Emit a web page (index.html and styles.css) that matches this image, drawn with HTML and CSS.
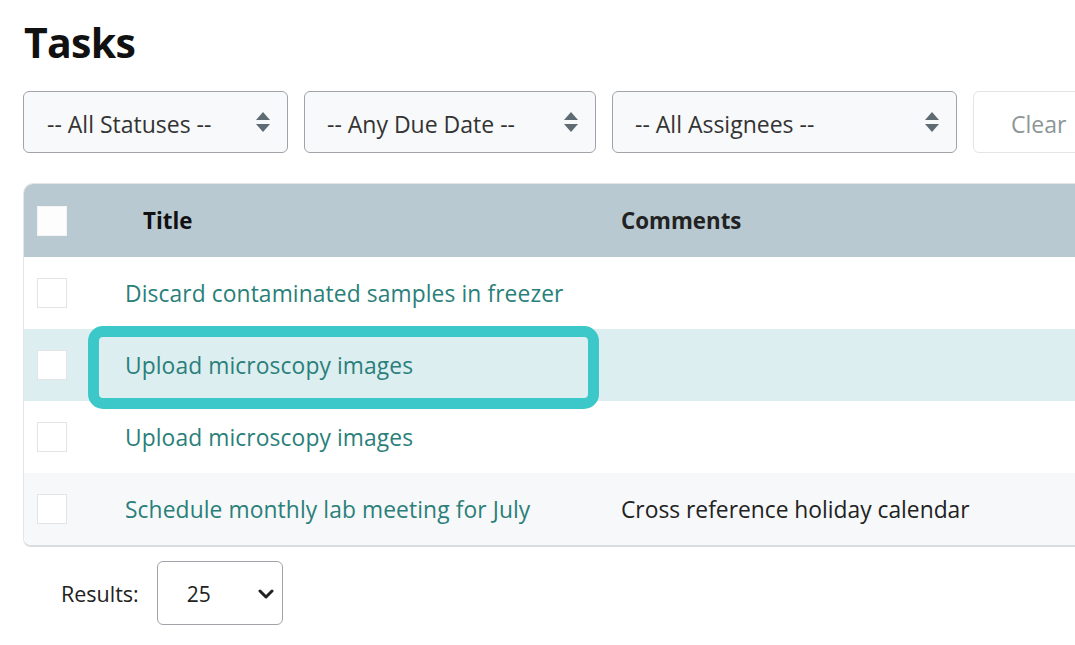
FILE: index.html
```html
<!DOCTYPE html>
<html lang="en">
<head>
<meta charset="utf-8">
<title>Tasks</title>
<link rel="stylesheet" href="styles.css">
</head>
<body>
<div class="page">
  <h1 class="title">Tasks</h1>

  <div class="filters">
    <div class="select w1">
      <span>-- All Statuses --</span>
      <svg class="updown" width="16" height="22" viewBox="0 0 16 22"><path d="M8 1 L15 9 L1 9 Z M1 13 L15 13 L8 21 Z" fill="#5f6b73"/></svg>
    </div>
    <div class="select w2">
      <span>-- Any Due Date --</span>
      <svg class="updown" width="16" height="22" viewBox="0 0 16 22"><path d="M8 1 L15 9 L1 9 Z M1 13 L15 13 L8 21 Z" fill="#5f6b73"/></svg>
    </div>
    <div class="select w3">
      <span>-- All Assignees --</span>
      <svg class="updown" width="16" height="22" viewBox="0 0 16 22"><path d="M8 1 L15 9 L1 9 Z M1 13 L15 13 L8 21 Z" fill="#5f6b73"/></svg>
    </div>
    <div class="btn-clear">Clear</div>
  </div>

  <div class="table">
    <div class="row head">
      <div class="cell-check"><span class="box box-head"></span></div>
      <div class="cell-title th-title">Title</div>
      <div class="cell-comments">Comments</div>
    </div>
    <div class="row">
      <div class="cell-check"><span class="box"></span></div>
      <div class="cell-title"><a class="link">Discard contaminated samples in freezer</a></div>
      <div class="cell-comments"></div>
    </div>
    <div class="row active">
      <div class="cell-check"><span class="box"></span></div>
      <div class="cell-title"><a class="link">Upload microscopy images</a></div>
      <div class="cell-comments"></div>
      <div class="callout"></div>
    </div>
    <div class="row">
      <div class="cell-check"><span class="box"></span></div>
      <div class="cell-title"><a class="link">Upload microscopy images</a></div>
      <div class="cell-comments"></div>
    </div>
    <div class="row striped last">
      <div class="cell-check"><span class="box"></span></div>
      <div class="cell-title"><a class="link">Schedule monthly lab meeting for July</a></div>
      <div class="cell-comments">Cross reference holiday calendar</div>
    </div>
  </div>

  <div class="results">
    <span class="results-label">Results:</span>
    <div class="page-size">
      <span>25</span>
      <svg class="chev" width="16" height="12" viewBox="0 0 16 12"><path d="M2 3 L8 9 L14 3" fill="none" stroke="#222" stroke-width="3" stroke-linecap="round" stroke-linejoin="round"/></svg>
    </div>
  </div>
</div>
</body>
</html>
```

FILE: styles.css
```css
* { box-sizing: border-box; }

html, body {
  margin: 0;
  padding: 0;
  background: #ffffff;
  font-family: "Open Sans", "Noto Sans", "Liberation Sans", sans-serif;
  color: #222;
  overflow: hidden;
}

.page {
  width: 1075px;
  overflow: hidden;
  padding: 14px 0 0 23px;
}

.title {
  margin: 0 0 0 1px;
  font-size: 41px;
  font-weight: 700;
  line-height: 56px;
  color: #111;
  letter-spacing: -0.7px;
}

.filters {
  display: flex;
  gap: 16px;
  margin-top: 21px;
}

.select {
  flex: none;
  height: 62px;
  border: 1.5px solid #a0a4a8;
  border-radius: 6px;
  background: #f8f9fa;
  display: flex;
  align-items: center;
  justify-content: space-between;
  padding: 0 16px 0 23px;
  font-size: 23px;
  color: #333;
}
.select span { position: relative; top: 2px; }
.select.w1 { width: 265px; }
.select.w2 { width: 292px; padding-left: 22px; padding-right: 16px; }
.select.w3 { width: 345px; padding-left: 22px; padding-right: 16px; }

.updown { display: block; }

.btn-clear {
  flex: none;
  width: 140px;
  height: 62px;
  border: 1.5px solid #e2e5e8;
  border-radius: 6px;
  background: #fff;
  display: flex;
  align-items: center;
  padding: 3px 0 0 37px;
  font-size: 23px;
  color: #8c9696;
}

.table {
  margin-top: 30px;
  width: 1100px;
  border: 1px solid #e3e6e8;
  border-bottom: 2px solid #dadddf;
  border-radius: 10px 0 0 8px;
}

.row {
  position: relative;
  display: grid;
  grid-template-columns: 101px 496px 1fr;
  align-items: center;
  height: 72px;
  font-size: 22.8px;
  background: #fff;
}
.row.head {
  height: 73px;
  background: #b9c9d1;
  border-radius: 9px 0 0 0;
  font-weight: 700;
  font-size: 22.3px;
  color: #111;
}
.row.active { background: #ddeef1; }
.row.striped { background: #f7f8f9; }
.row.last { border-radius: 0 0 0 8px; }

.cell-check {
  padding-left: 13px;
  display: flex;
  align-items: center;
}
.box {
  width: 30px;
  height: 30px;
  border: 1px solid #e2e4e6;
  background: #fff;
  display: block;
}
.box-head {
  border-color: #f3f4f5;
  background: #fdfdfd;
}

.th-title { padding-left: 18px; }

.link {
  color: #2a7f7a;
  text-decoration: none;
  letter-spacing: 0.1px;
}

.cell-comments { color: #222; }

.callout {
  position: absolute;
  z-index: 2;
  left: 64px;
  top: -3px;
  width: 511px;
  height: 83px;
  border: 11px solid #3cc8c8;
  border-radius: 15px;
  pointer-events: none;
}

.results {
  display: flex;
  align-items: center;
  margin-top: 14px;
  padding-left: 38px;
}
.results-label {
  font-size: 21.5px;
  color: #222;
  margin-right: 18px;
}
.page-size {
  width: 126px;
  height: 64px;
  border: 1.5px solid #a0a4a8;
  border-radius: 6px;
  background: #fff;
  display: flex;
  align-items: center;
  justify-content: space-between;
  padding: 2px 8px 0 29px;
  font-size: 21px;
  color: #222;
}
.chev { display: block; }
```
